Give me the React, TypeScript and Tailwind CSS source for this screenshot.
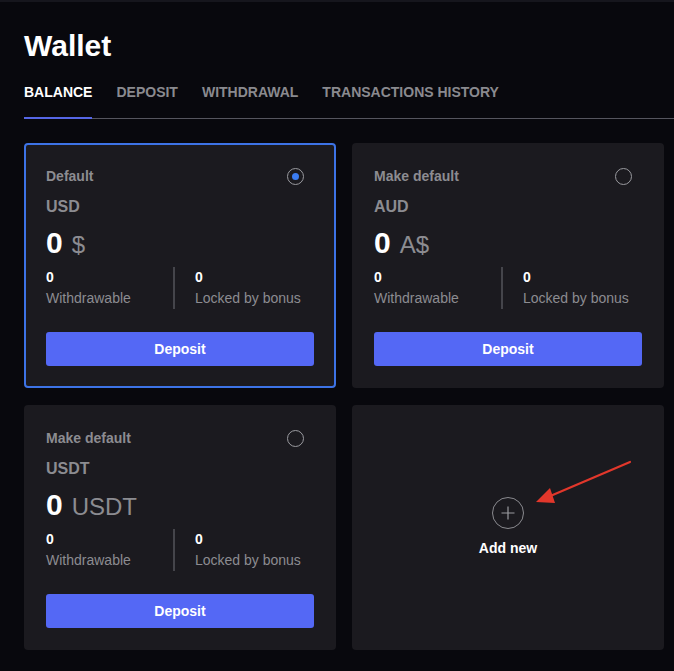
import React from 'react';

type Wallet = {
  label: string;
  code: string;
  symbol: string;
  selected?: boolean;
};

const wallets: Wallet[] = [
  { label: 'Default', code: 'USD', symbol: '$', selected: true },
  { label: 'Make default', code: 'AUD', symbol: 'A$' },
  { label: 'Make default', code: 'USDT', symbol: 'USDT' },
];

const tabs = ['BALANCE', 'DEPOSIT', 'WITHDRAWAL', 'TRANSACTIONS HISTORY'];

const WalletCard: React.FC<{ wallet: Wallet }> = ({ wallet }) => {
  return (
    <div
      className={
        wallet.selected
          ? 'h-[245px] rounded-[4px] border-2 border-[#3d73e6] bg-[#1b1a1f] px-5 pt-[21px]'
          : 'h-[245px] rounded-[4px] border-2 border-transparent bg-[#1b1a1f] px-5 pt-[21px]'
      }
    >
      <div className="flex h-5 items-center justify-between">
        <span className="text-[14px] font-bold leading-5 text-[#8c8c91]">{wallet.label}</span>
        <span className="mr-[10px] flex h-[17px] w-[17px] items-center justify-center rounded-full border border-[#9a9a9f]">
          {wallet.selected && <span className="h-[7px] w-[7px] rounded-full bg-[#3b7cf2]" />}
        </span>
      </div>
      <div className="mt-[11px] text-[16px] font-bold leading-5 text-[#8c8c91]">{wallet.code}</div>
      <div className="mt-2 flex h-9 items-baseline">
        <span className="text-[30px] font-bold leading-9 text-white">0</span>
        <span className="ml-[9px] text-[24px] leading-9 text-[#8c8c91]">{wallet.symbol}</span>
      </div>
      <div className="mt-[6px] flex h-[42px]">
        <div className="w-[129px] border-r-2 border-[#45454b]">
          <div className="text-[14px] font-bold leading-[21px] text-white">0</div>
          <div className="text-[14px] leading-[21px] text-[#8c8c91]">Withdrawable</div>
        </div>
        <div className="pl-5">
          <div className="text-[14px] font-bold leading-[21px] text-white">0</div>
          <div className="text-[14px] leading-[21px] text-[#8c8c91]">Locked by bonus</div>
        </div>
      </div>
      <button className="mt-[23px] h-[34px] w-full rounded-[3px] bg-[#5468f5] text-[14px] font-bold text-white">
        Deposit
      </button>
    </div>
  );
};

export default function App() {
  return (
    <div
      className="min-h-[671px] w-full border-t-2 border-[#16161d] bg-[#08080d] pb-5"
      style={{ fontFamily: '"Liberation Sans", Arial, sans-serif' }}
    >
      <h1 className="pl-6 pt-[26px] text-[30px] font-bold leading-9 text-white">Wallet</h1>

      <div className="ml-6 mt-[18px] flex gap-6 border-b border-[#55555e]">
        {tabs.map((tab, i) => (
          <div
            key={tab}
            className={
              i === 0
                ? '-mb-px border-b-2 border-[#5566e6] pb-[14px] text-[14px] font-bold leading-5 text-white'
                : 'pb-4 text-[14px] font-bold leading-5 text-[#8a8a8f]'
            }
          >
            {tab}
          </div>
        ))}
      </div>

      <div className="mt-6 grid grid-cols-[312px_312px] gap-x-4 gap-y-[17px] pl-6">
        {wallets.map((w) => (
          <WalletCard key={w.code} wallet={w} />
        ))}

        <div className="relative flex h-[245px] flex-col items-center justify-center rounded-[4px] bg-[#1b1a1f]">
          <span className="flex h-8 w-8 items-center justify-center rounded-full border border-[#8a8a8f]">
            <svg width="14" height="14" viewBox="0 0 14 14" fill="none">
              <path d="M7 0.5v13M0.5 7h13" stroke="#9a9a9f" strokeWidth="1.2" />
            </svg>
          </span>
          <span className="mt-[9px] text-[14px] font-bold leading-5 text-white">Add new</span>

          {/* red annotation arrow */}
          <svg className="absolute left-0 top-0" width="312" height="245" viewBox="0 0 312 245" fill="none">
            <path d="M278 57 L196 92" stroke="#e2372b" strokeWidth="2.2" strokeLinecap="round" />
            <path d="M184 97 L198 83 L203 98 Z" fill="#e2372b" />
          </svg>
        </div>
      </div>
    </div>
  );
}
